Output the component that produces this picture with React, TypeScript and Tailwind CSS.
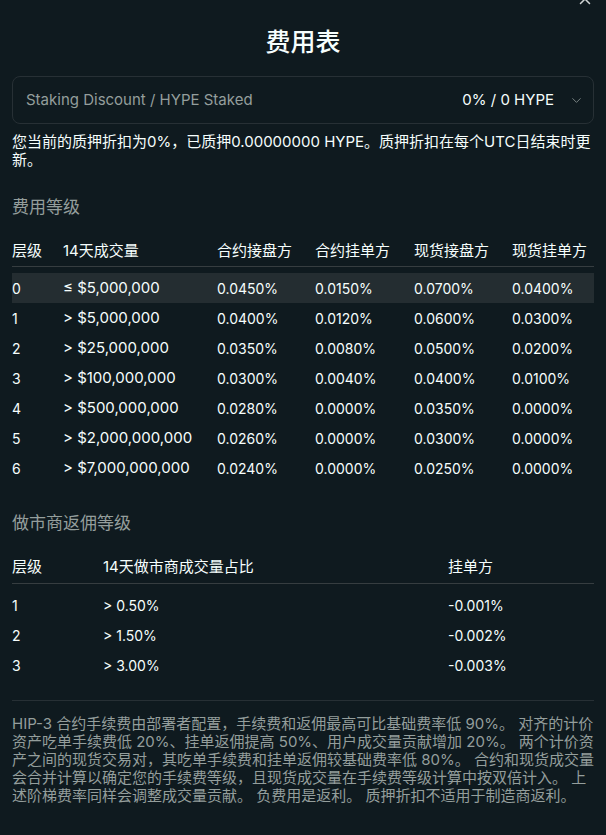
import { ChevronDown, X } from "lucide-react";

const FEE_TIERS = [
  ["0", "≤ $5,000,000", "0.0450%", "0.0150%", "0.0700%", "0.0400%"],
  ["1", "> $5,000,000", "0.0400%", "0.0120%", "0.0600%", "0.0300%"],
  ["2", "> $25,000,000", "0.0350%", "0.0080%", "0.0500%", "0.0200%"],
  ["3", "> $100,000,000", "0.0300%", "0.0040%", "0.0400%", "0.0100%"],
  ["4", "> $500,000,000", "0.0280%", "0.0000%", "0.0350%", "0.0000%"],
  ["5", "> $2,000,000,000", "0.0260%", "0.0000%", "0.0300%", "0.0000%"],
  ["6", "> $7,000,000,000", "0.0240%", "0.0000%", "0.0250%", "0.0000%"],
];

const MAKER_TIERS = [
  ["1", "> 0.50%", "-0.001%"],
  ["2", "> 1.50%", "-0.002%"],
  ["3", "> 3.00%", "-0.003%"],
];

const FEE_COLS = "grid grid-cols-[51px_154px_98px_99px_98px_1fr]";
const MAKER_COLS = "grid grid-cols-[91px_345px_1fr]";

export default function App() {
  return (
    <div className="relative min-h-screen w-[606px] bg-[#0f1a1f] px-3 text-[#f6fefd] font-['Inter','Noto_Sans_CJK_SC',sans-serif] overflow-hidden">
      <X size={18} strokeWidth={2} className="absolute right-[12px] top-[-10px] text-[#d1d5d5]" />

      <h1 className="pt-[25px] text-center text-[25px] font-medium leading-[34px]">费用表</h1>

      {/* Staking discount selector */}
      <div className="mt-[17px] flex h-[48px] items-center justify-between rounded-lg border border-[#273035] pl-[13px] pr-[9px]">
        <span className="text-[15px] text-[#949e9c]">Staking Discount / HYPE Staked</span>
        <div className="flex items-center gap-[15px]">
          <span className="text-[15px]">0% / 0 HYPE</span>
          <ChevronDown size={15} strokeWidth={1.25} className="text-[#949e9c]" />
        </div>
      </div>

      <p className="mt-[9px] text-[15px] leading-[18px]">
        您当前的质押折扣为0%，已质押0.00000000 HYPE。质押折扣在每个UTC日结束时更新。
      </p>

      {/* Fee tiers */}
      <h2 className="mt-[26px] text-[17px] leading-[24px] text-[#949e9c]">费用等级</h2>
      <div className="mt-[18px] text-[14px]">
        <div className={`${FEE_COLS} h-[30px] items-center border-b border-[#363d40] text-[15px]`}>
          <span>层级</span>
          <span>14天成交量</span>
          <span>合约接盘方</span>
          <span>合约挂单方</span>
          <span>现货接盘方</span>
          <span>现货挂单方</span>
        </div>
        <div className="mt-[6px]">
          {FEE_TIERS.map((row, i) => (
            <div key={row[0]} className={`${FEE_COLS} h-[30px] items-center ${i === 0 ? "bg-[#242d31]" : ""}`}>
              {row.map((cell, j) => (
                <span key={j} className={j === 1 ? "text-[15px]" : ""}>{cell}</span>
              ))}
            </div>
          ))}
        </div>
      </div>

      {/* Maker rebate tiers */}
      <h2 className="mt-[28px] text-[17px] leading-[24px] text-[#949e9c]">做市商返佣等级</h2>
      <div className="mt-[16px] text-[14px]">
        <div className={`${MAKER_COLS} h-[33px] items-center border-b border-[#363d40] text-[15px]`}>
          <span>层级</span>
          <span>14天做市商成交量占比</span>
          <span>挂单方</span>
        </div>
        <div className="mt-[6px]">
          {MAKER_TIERS.map((row) => (
            <div key={row[0]} className={`${MAKER_COLS} h-[30px] items-center`}>
              {row.map((cell, j) => (
                <span key={j}>{cell}</span>
              ))}
            </div>
          ))}
        </div>
      </div>

      <div className="mt-[20px] border-t border-[#273035] pt-[14px] pb-6">
        <p className="text-[15px] leading-[18px] text-[#949e9c]">
          HIP-3 合约手续费由部署者配置，手续费和返佣最高可比基础费率低 90%。 对齐的计价资产吃单手续费低 20%、挂单返佣提高 50%、用户成交量贡献增加 20%。 两个计价资产之间的现货交易对，其吃单手续费和挂单返佣较基础费率低 80%。 合约和现货成交量会合并计算以确定您的手续费等级，且现货成交量在手续费等级计算中按双倍计入。 上述阶梯费率同样会调整成交量贡献。 负费用是返利。 质押折扣不适用于制造商返利。
        </p>
      </div>
    </div>
  );
}
